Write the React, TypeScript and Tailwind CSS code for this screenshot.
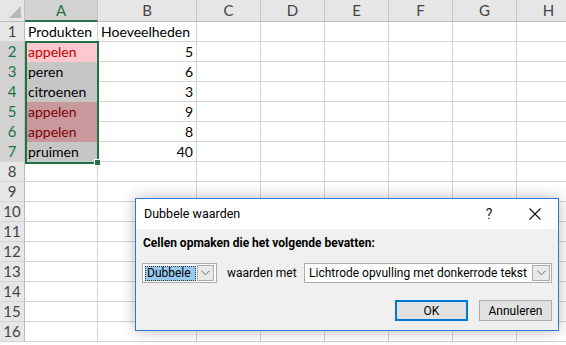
import React from "react";

const cols = [
  { label: "A", w: "w-[73px]", sel: true },
  { label: "B", w: "w-[99px]", sel: false },
  { label: "C", w: "w-[64px]", sel: false },
  { label: "D", w: "w-[64px]", sel: false },
  { label: "E", w: "w-[64px]", sel: false },
  { label: "F", w: "w-[64px]", sel: false },
  { label: "G", w: "w-[64px]", sel: false },
  { label: "H", w: "w-[64px]", sel: false },
];

type Row = { a?: string; b?: string; bNum?: boolean; kind?: "active" | "dup" | "sel" };

const rows: Row[] = [
  { a: "Produkten", b: "Hoeveelheden" },
  { a: "appelen", b: "5", bNum: true, kind: "active" },
  { a: "peren", b: "6", bNum: true, kind: "sel" },
  { a: "citroenen", b: "3", bNum: true, kind: "sel" },
  { a: "appelen", b: "9", bNum: true, kind: "dup" },
  { a: "appelen", b: "8", bNum: true, kind: "dup" },
  { a: "pruimen", b: "40", bNum: true, kind: "sel" },
  {}, {}, {}, {}, {}, {}, {}, {}, {},
];

function Chevron() {
  return (
    <svg width="9" height="6" viewBox="0 0 9 6" className="block">
      <path d="M0.5 0.8 L4.5 4.8 L8.5 0.8" fill="none" stroke="#6d6d6d" strokeWidth="1" />
    </svg>
  );
}

export default function App() {
  return (
    <div className="relative w-[566px] h-[345px] overflow-hidden bg-white font-['Lato',sans-serif] text-[14px] text-black">
      {/* header row */}
      <div className="flex h-[22px]">
        <div className="w-[25px] h-[22px] shrink-0 bg-[#e6e6e6] border-r border-b border-[#bdbdbd] flex items-end justify-end p-[3px]">
          <svg width="12" height="12" viewBox="0 0 12 12" className="block">
            <polygon points="0,12 12,12 12,0" fill="#b8b8b8" />
          </svg>
        </div>
        {cols.map((c) => (
          <div
            key={c.label}
            className={`${c.w} shrink-0 h-[22px] flex items-center justify-center border-r border-[#c6c6c6] text-[15px] ${
              c.sel
                ? "bg-[#d2d2d2] text-[#217346] border-b-2 border-b-[#217346]"
                : "bg-[#e6e6e6] text-[#444444] border-b border-b-[#bdbdbd]"
            }`}
          >
            {c.label}
          </div>
        ))}
      </div>
      {rows.map((r, i) => {
        const inSel = i >= 1 && i <= 6;
        let aCls = "bg-white border-b border-[#d4d4d4]";
        if (r.kind === "active") aCls = "bg-[#ffc7ce] text-[#c00000] border-b border-[#ffc7ce]";
        if (r.kind === "dup") aCls = "bg-[#c9989d] text-[#7d0005] border-b border-[#c9989d]";
        if (r.kind === "sel") aCls = "bg-[#c6c6c6] text-black border-b border-[#c6c6c6]";
        return (
          <div key={i} className="flex h-[20px]">
            <div
              className={`w-[25px] shrink-0 h-[20px] flex items-center justify-center border-b border-[#d4d4d4] border-r border-r-[#bdbdbd] text-[15px] ${
                inSel ? "bg-[#d2d2d2] text-[#217346]" : "bg-[#e6e6e6] text-[#444444]"
              }`}
            >
              {i + 1}
            </div>
            <div className={`w-[73px] shrink-0 h-[20px] border-r border-r-[#d4d4d4] pl-[3px] flex items-center leading-none whitespace-nowrap ${aCls}`}>
              {r.a}
            </div>
            <div
              className={`w-[99px] shrink-0 h-[20px] border-r border-b border-[#d4d4d4] flex items-center leading-none whitespace-nowrap ${
                r.bNum ? "justify-end pr-[3px]" : "pl-[3px]"
              }`}
            >
              {r.b}
            </div>
            {cols.slice(2).map((c) => (
              <div key={c.label} className={`${c.w} shrink-0 h-[20px] border-r border-b border-[#d4d4d4]`} />
            ))}
          </div>
        );
      })}

      {/* selection border */}
      <div className="absolute left-[25px] top-[41px] w-[74px] h-[123px] border-2 border-[#217346] pointer-events-none" />
      <div className="absolute left-[94px] top-[159px] w-[7px] h-[7px] bg-[#217346] border border-white" />

      {/* dialog */}
      <div className="absolute left-[135px] top-[198px] w-[424px] h-[133px] border border-[#2b7ad6] bg-[#f0f0f0] shadow-[0_0_14px_rgba(0,0,0,0.28)] flex flex-col font-['Roboto',sans-serif] text-[12px] text-black">
        <div className="h-[30px] bg-white flex items-center pl-[8px] shrink-0">
          <span className="flex-1 text-[12.5px]">Dubbele waarden</span>
          <span className="w-[46px] text-center text-[14px] text-[#222]">?</span>
          <span className="w-[46px] flex justify-center">
            <svg width="12" height="12" viewBox="0 0 12 12" className="block">
              <path d="M0.5 0.5 L11.5 11.5 M11.5 0.5 L0.5 11.5" stroke="#111" strokeWidth="1.1" />
            </svg>
          </span>
        </div>
        <div className="flex flex-col px-[6px]">
          <div className="mt-[6px] pl-[1px] font-bold leading-[16px] whitespace-nowrap">Cellen opmaken die het volgende bevatten:</div>
          <div className="mt-[12px] flex items-center h-[20px]">
            <div className="w-[75px] h-[20px] border border-[#acacac] bg-white flex items-center p-[2px] gap-[1px]">
              <div className="flex-1 h-[15px] bg-[#99c9ef] border border-dotted border-[#333] flex items-center pl-[1px] leading-none whitespace-nowrap">
                Dubbele
              </div>
              <div className="w-[17px] h-[16px] bg-[#e9e9e9] border border-[#acacac] flex items-center justify-center">
                <Chevron />
              </div>
            </div>
            <div className="ml-[10px] w-[77px] whitespace-nowrap">waarden met</div>
            <div className="w-[248px] h-[20px] border border-[#acacac] bg-white flex items-center pl-[4px] pr-[1px]">
              <span className="flex-1 whitespace-nowrap">Lichtrode opvulling met donkerrode tekst</span>
              <div className="w-[18px] h-[16px] bg-[#e9e9e9] border border-[#acacac] flex items-center justify-center">
                <Chevron />
              </div>
            </div>
          </div>
          <div className="mt-[17px] flex justify-end gap-[11px]">
            <div className="w-[73px] h-[21px] border-2 border-[#0078d7] bg-[#e1e1e1] flex items-center justify-center">OK</div>
            <div className="w-[73px] h-[21px] border border-[#adadad] bg-[#e1e1e1] flex items-center justify-center">Annuleren</div>
          </div>
        </div>
      </div>
    </div>
  );
}
